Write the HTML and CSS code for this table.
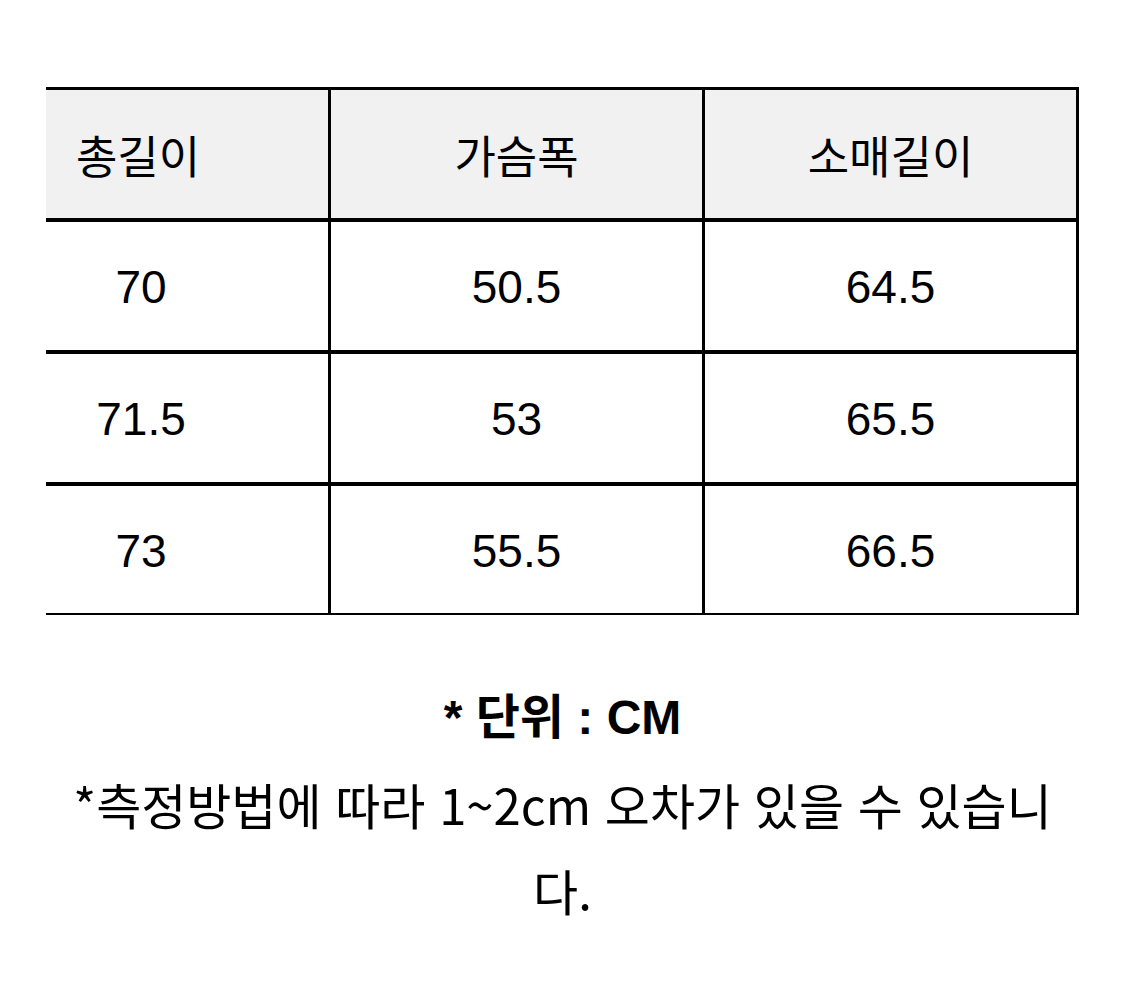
FILE: index.html
```html
<!DOCTYPE html>
<html lang="ko">
<head>
<meta charset="utf-8">
<link rel="stylesheet" href="styles.css">
</head>
<body>
<div class="size-table">
  <div class="cell head first">총길이</div>
  <div class="cell head">가슴폭</div>
  <div class="cell head">소매길이</div>

  <div class="cell first">70</div>
  <div class="cell">50.5</div>
  <div class="cell">64.5</div>

  <div class="cell first">71.5</div>
  <div class="cell">53</div>
  <div class="cell">65.5</div>

  <div class="cell first last">73</div>
  <div class="cell last">55.5</div>
  <div class="cell last">66.5</div>
</div>
<div class="notes">
  <p class="unit">* 단위 : CM</p>
  <p class="note">*측정방법에 따라 1~2cm 오차가 있을 수 있습니다.</p>
</div>
</body>
</html>
```
FILE: styles.css
```css
html, body {
  margin: 0;
  padding: 0;
  background: #ffffff;
  color: #000000;
}
body {
  font-family: "Liberation Sans", "Noto Sans CJK KR", sans-serif;
}
.size-table {
  margin: 87px 0 0 46px;
  width: 1033px;
  display: grid;
  grid-template-columns: 285px 374px 374px;
  grid-template-rows: 132px 132px 132px 129px;
  border-top: 3px solid #000;
  box-sizing: border-box;
}
.cell {
  box-sizing: border-box;
  border-right: 3px solid #000;
  border-bottom: 4px solid #000;
  display: flex;
  align-items: center;
  justify-content: center;
  font-size: 46px;
  padding-top: 2px;
}
.cell.last {
  border-bottom-width: 2px;
}
.cell.first {
  padding-right: 92px;
}
.head {
  background: #f1f1f1;
  font-family: "Noto Sans CJK KR", sans-serif;
  font-size: 45px;
  font-weight: 400;
  padding-top: 0;
}
.cell.head.first {
  padding-right: 98px;
}
.notes {
  margin: 60px auto 0;
  width: 1000px;
  text-align: center;
}
.notes p {
  margin: 0;
  line-height: 86px;
}
.unit {
  font-family: "Liberation Sans", "Noto Sans CJK KR", sans-serif;
  font-weight: 700;
  font-size: 48px;
}
.note {
  font-family: "Noto Sans CJK KR", sans-serif;
  font-size: 49px;
  font-weight: 400;
  margin-top: -4px;
}
```
